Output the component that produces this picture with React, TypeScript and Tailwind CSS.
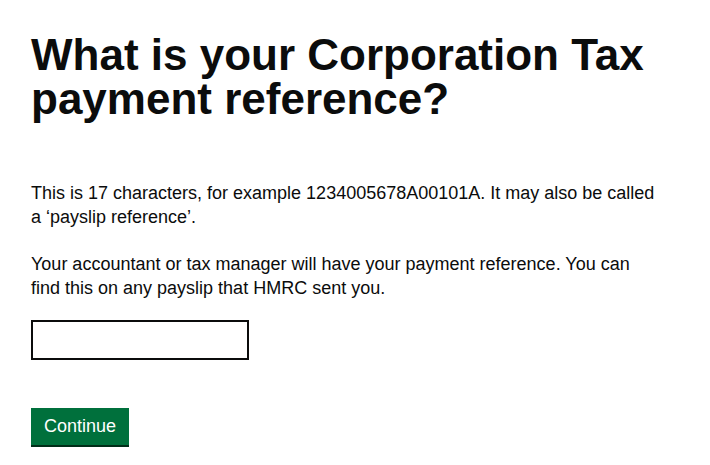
export default function App() {
  return (
    <div className="min-h-screen bg-white pl-[31px] pt-[33px] font-['Liberation_Sans',Arial,sans-serif] text-[#0b0c0c]">
      <h1 className="w-[640px] text-[44px] font-bold leading-[44px]">
        What is your Corporation Tax payment reference?
      </h1>

      <div className="mt-[60px] w-[628px] space-y-[23px] text-[18px] leading-[24px]">
        <p>
          This is 17 characters, for example 1234005678A00101A. It may also be called a ‘payslip reference’.
        </p>
        <p>
          Your accountant or tax manager will have your payment reference. You can find this on any payslip that HMRC sent you.
        </p>
      </div>

      <input
        type="text"
        aria-label="Corporation Tax payment reference"
        className="mt-[20px] block h-[40px] w-[218px] border-2 border-[#0b0c0c] bg-white px-[5px] text-[18px] outline-none"
      />

      <button className="mt-[48px] block h-[37px] bg-[#00703c] px-[13px] text-[18px] leading-[37px] text-white shadow-[0_2px_0_#002d18]">
        Continue
      </button>
    </div>
  );
}
